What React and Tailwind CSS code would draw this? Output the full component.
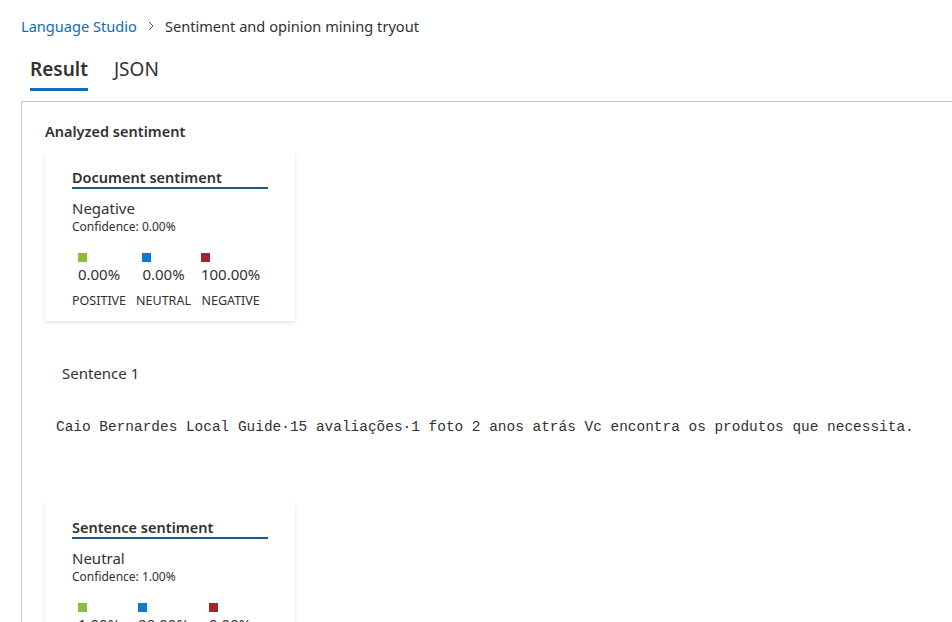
import React from 'react';

const font = { fontFamily: '"Noto Sans", "Open Sans", sans-serif' };

const SentimentCard = ({ title, label, confidence, scores }) => (
  <div className="w-[250px] bg-white pl-[27px] pr-[27px] pt-[15px] pb-[12px] shadow-[0_1.6px_3.6px_rgba(0,0,0,0.13),0_0.3px_0.9px_rgba(0,0,0,0.11)]">
    <div className="border-b-2 border-[#1b5a8e] pb-[0px]">
      <h3 className="text-[14.5px] font-semibold leading-[20px] text-[#323130]">{title}</h3>
    </div>
    <p className="mt-[9px] text-[15px] leading-[20px] text-[#323130]">{label}</p>
    <p className="text-[12px] leading-[18px] text-[#323130]">Confidence: {confidence}</p>
    <div className="mt-[17px] flex gap-[10px]">
      {scores.map((s) => (
        <div key={s.name} className="flex flex-col items-center">
          <div className="flex flex-col items-start">
            <span className={`h-[9px] w-[9px] ${s.color}`} />
            <span className="mt-[2px] text-[15px] leading-[20px] text-[#323130]">{s.value}</span>
          </div>
          <span className="mt-[9px] text-[12.5px] leading-[16px] text-[#323130]">{s.name}</span>
        </div>
      ))}
    </div>
  </div>
);

export default function App() {
  return (
    <div className="h-[622px] w-[952px] overflow-hidden bg-white" style={font}>
      <nav className="flex items-center pl-[21px] pt-[15px] text-[14.6px] leading-[22px]">
        <span className="text-[#0f6cbd]">Language Studio</span>
        <svg className="mx-[8px] h-[12px] w-[12px]" viewBox="0 0 12 12" fill="none" stroke="#605e5c" strokeWidth="1">
          <path d="M4 2l4 4-4 4" />
        </svg>
        <span className="text-[#323130]">Sentiment and opinion mining tryout</span>
      </nav>

      <div className="mt-[19px] flex gap-[26px] pl-[30px]">
        <div className="flex flex-col">
          <span className="text-[19px] font-semibold leading-[26px] text-[#323130]">Result</span>
          <span className="mt-[6px] h-[3px] bg-[#0f6cbd]" />
        </div>
        <span className="text-[19px] leading-[26px] text-[#323130]">JSON</span>
      </div>

      <div className="ml-[21px] mt-[10px] border-l border-t border-[#c8c6c4] pl-[23px] pt-[19px]">
        <h2 className="text-[14.5px] font-semibold leading-[20px] text-[#323130]">Analyzed sentiment</h2>
        <div className="mt-[11px]">
          <SentimentCard
            title="Document sentiment"
            label="Negative"
            confidence="0.00%"
            scores={[
              { name: 'POSITIVE', value: '0.00%', color: 'bg-[#8cbd3c]' },
              { name: 'NEUTRAL', value: '0.00%', color: 'bg-[#0f78d4]' },
              { name: 'NEGATIVE', value: '100.00%', color: 'bg-[#a4262c]' },
            ]}
          />
        </div>

        <p className="mt-[42px] pl-[17px] text-[15px] leading-[20px] text-[#323130]">Sentence 1</p>

        <p
          className="mt-[34px] pl-[11px] text-[14.45px] leading-[20px] whitespace-nowrap text-[#323130]"
          style={{ fontFamily: '"Liberation Mono", "DejaVu Sans Mono", monospace' }}
        >
          Caio Bernardes Local Guide·15 avaliações·1 foto 2 anos atrás Vc encontra os produtos que necessita.
        </p>

        <div className="mt-[65px]">
          <SentimentCard
            title="Sentence sentiment"
            label="Neutral"
            confidence="1.00%"
            scores={[
              { name: 'POSITIVE', value: '1.00%', color: 'bg-[#8cbd3c]' },
              { name: 'NEUTRAL', value: '99.00%', color: 'bg-[#0f78d4]' },
              { name: 'NEGATIVE', value: '0.00%', color: 'bg-[#a4262c]' },
            ]}
          />
        </div>
      </div>
    </div>
  );
}
